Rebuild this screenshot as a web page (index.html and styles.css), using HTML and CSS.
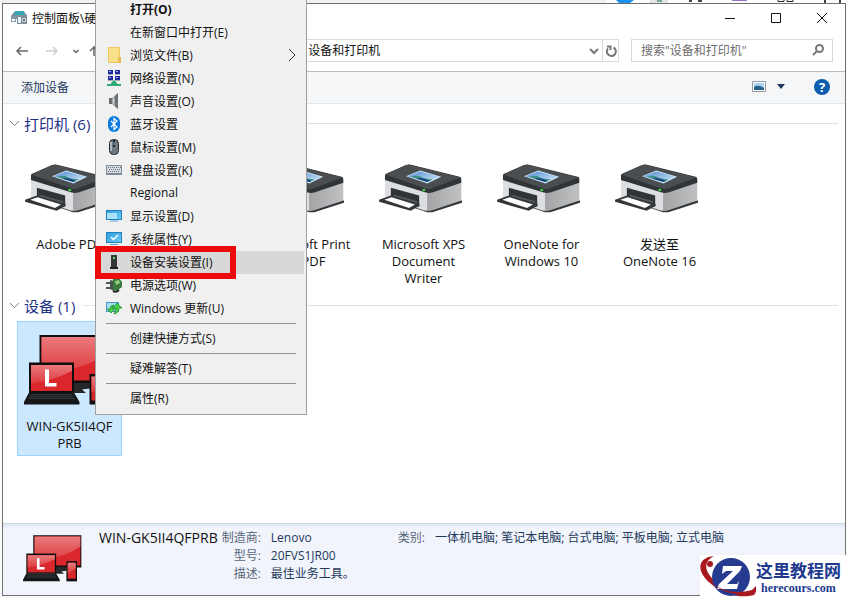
FILE: index.html
```html
<!DOCTYPE html>
<html lang="zh-CN">
<head>
    <meta charset="UTF-8">
    <meta name="viewport" content="width=device-width, initial-scale=1.0">
    <title>设备和打印机</title>
    <link rel="stylesheet" href="styles.css">
</head>
<body>
    <svg class="symbols" aria-hidden="true">
        <defs>
            <linearGradient id="side" x1="0" x2="1"><stop offset="0" stop-color="#a2a4a6"/><stop offset="1" stop-color="#bfc1c3"/></linearGradient>
            <linearGradient id="glass" x1="0" y1="0" x2="0" y2="1"><stop offset="0" stop-color="#ea7a7c"/><stop offset="1" stop-color="#dd3a3e"/></linearGradient>
            <linearGradient id="sky" x1="0" y1="0" x2="1" y2="1"><stop offset="0" stop-color="#4d8ad2"/><stop offset="1" stop-color="#d8edf8"/></linearGradient>
            <linearGradient id="blue" x1="0" y1="0" x2="1" y2="1"><stop offset="0" stop-color="#2d9fe3"/><stop offset="1" stop-color="#6cc9f4"/></linearGradient>
        </defs>
        <symbol id="printer" viewBox="232 52 256 152">
            <path d="M256 160L380 202L396 202L486 173V165L385 190Z" fill="#35383b"/>
            <path d="M252 100L385 138V196Q374 200 358 192L252 160Z" fill="#dddee1"/>
            <path d="M380 138L484 108V166L396 196Q386 199 380 198Z" fill="url(#side)"/>
            <path d="M270 127L356 151V184L270 160Z" fill="#303437"/>
            <path d="M278 148L350 168V176L278 156Z" fill="#55595c"/>
            <path d="M234 164L270 151L357 176V183L330 197L234 170Z" fill="#33373a"/>
            <path d="M250 164L272 156L343 178L325 189Z" fill="#fff"/>
            <path d="M252 89Q252 86 257 84L316 58Q323 55 331 57L479 94Q485 96 484 101V112L396 142Q386 145 376 142L252 104Z" fill="#303437"/>
            <path d="M254 88L316 59Q323 56 331 58L481 96L394 129Q386 132 377 130Z" fill="#4a4e51"/>
            <path d="M316 92L359 75L423 94L381 114Z" fill="#cbe6fa"/>
            <path d="M321 92L359 78L416 94L381 110Z" fill="url(#sky)"/>
            <path d="M330 94Q352 87 361 94T398 102L381 110Z" fill="#3f9186"/>
            <path d="M346 99Q368 94 388 107L381 110Z" fill="#17487f"/>
            <path d="M365 132L374 130V137L367 138Z" fill="#3bdc43"/>
        </symbol>
        <symbol id="computer" viewBox="68 74 178 140">
            <path d="M99 74H244V171H99Z" fill="#0e0e0f"/>
            <path d="M103 78H241V165H103Z" fill="#d9272c"/>
            <path d="M103 78H241V108Q190 144 103 152Z" fill="url(#glass)"/>
            <path d="M165 170H200V181L184 183L192 190H165Z" fill="#26282a"/>
            <path d="M78 129H168V190H78Z" fill="#0e0e0f"/>
            <path d="M82 134H164V186H82Z" fill="#d9272c"/>
            <path d="M82 134H164V146Q125 166 82 171Z" fill="url(#glass)"/>
            <path d="M110 143H118V170H133V177H110Z" fill="#fff"/>
            <path d="M78 189H168L179 208V213H68V208Z" fill="#151618"/>
            <path d="M83 192H163L170 202H77Z" fill="#36393c"/>
            <path d="M82 195H166M79 199H169" stroke="#111214" stroke-width="1.5"/>
            <path d="M199 152H231V213H199Z" fill="#0e0e0f"/>
            <path d="M203 157H227V205H203Z" fill="#d9272c"/>
            <path d="M203 157H227V174L203 190Z" fill="url(#glass)"/>
        </symbol>
    </svg>

    <div class="backdrop">
        <svg class="behind" viewBox="0 0 240 3" aria-hidden="true">
            <path d="M0 0H240V3H0Z" fill="#fff"/>
            <path d="M10 0H28L24 3H13Z" fill="#1a90ee"/>
            <path d="M44 0H62V3H44Z" fill="#dfe6e5"/><path d="M51 0H56V2H51Z" fill="#75a798"/>
            <path d="M83 1H86M92 1H96M219 0V3M234 0V3" stroke="#444" stroke-width="2"/>
            <path d="M126 0H141V1H126Z" fill="#9572ce"/>
            <path d="M172 0V1.5H178V0M181 0V1.5H187V0" fill="none" stroke="#222"/>
        </svg>
        <div class="window">
            <header class="titlebar">
                <svg class="app-icon" viewBox="0 0 16 16" aria-hidden="true">
                    <path d="M0 6L3 2H13L16 5V9H0Z" fill="#7f929e"/><path d="M4 1H13L14 5H3Z" fill="#38a5b4"/>
                    <path d="M0 6H5V12H0Z" fill="#8798a4"/><path d="M1 9H4V11H1Z" fill="#fff"/>
                    <path d="M6 6H16V14H6Z" fill="#7f8f9b"/><path d="M7 7H10V13H7Z" fill="#e8f1f5"/><circle cx="13" cy="10" r="2" fill="#e6edf1"/><circle cx="13" cy="10" r="1" fill="#34444f"/>
                </svg>
                <h1 class="title">控制面板\硬件和声音\设备和打印机</h1>
                <div class="window-buttons">
                    <button class="window-btn" aria-label="最小化"><svg viewBox="0 0 12 12"><path d="M1 6.5H11"/></svg></button>
                    <button class="window-btn" aria-label="最大化"><svg viewBox="0 0 12 12"><path d="M1.500 1.500H10.500V10.500H1.500Z"/></svg></button>
                    <button class="window-btn" aria-label="关闭"><svg viewBox="0 0 12 12"><path d="M1 1L11 11M11 1L1 11"/></svg></button>
                </div>
            </header>

            <nav class="navbar">
                <button class="nav-btn" aria-label="后退"><svg viewBox="0 0 14 12"><path d="M13 6H2M6 2L2 6L6 10" stroke="#666"/></svg></button>
                <button class="nav-btn forward" aria-label="前进"><svg viewBox="0 0 14 12"><path d="M1 6H12M8 2L12 6L8 10" stroke="#ccc"/></svg></button>
                <button class="nav-btn narrow" aria-label="最近浏览的位置"><svg viewBox="0 0 14 12"><path d="M4.500 5L7 7.500L9.500 5" stroke="#666"/></svg></button>
                <button class="nav-btn narrow" aria-label="上移"><svg viewBox="0 0 14 12"><path d="M7 11V1M3 6L7 2L11 6" stroke="#666"/></svg></button>
                <div class="address">
                    <ol class="crumbs">
                        <li><a href="#">控制面板</a></li>
                        <li><a href="#">硬件和声音</a></li>
                        <li><a href="#">设备和打印机</a></li>
                    </ol>
                    <button class="address-btn" aria-label="展开"><svg viewBox="0 0 14 14"><path d="M3 5L7 9L11 5"/></svg></button>
                    <button class="address-btn refresh" aria-label="刷新"><svg viewBox="0 0 14 14"><path d="M9.500 3.500A4.500 4.500 0 1 1 4 4.500M3 2.500H6.500V6"/></svg></button>
                </div>
                <div class="search">
                    <input class="search-input" type="text" aria-label="搜索" placeholder="搜索&quot;设备和打印机&quot;">
                    <svg viewBox="0 0 14 14" aria-hidden="true"><circle cx="8.500" cy="5.500" r="3.500"/><path d="M6 8L2 12"/></svg>
                </div>
            </nav>

            <div class="toolbar">
                <button class="add-device">添加设备</button>
                <button class="view-btn" aria-label="更改视图">
                    <svg width="14" height="11" viewBox="0 0 14 11"><path d="M.5.5H13.500V10.500H.5Z" fill="#fff" stroke="#929ba2"/><path d="M2 2H12V9H2Z" fill="#a7d3ef"/><path d="M2 6Q6 3 12 7V9H2Z" fill="#24628c"/></svg>
                    <svg width="8" height="5" viewBox="0 0 8 5"><path d="M0 0H8L4 5Z" fill="#1e395b"/></svg>
                </button>
                <button class="help-btn" aria-label="帮助">?</button>
            </div>

            <main class="content">
                <section>
                    <h2 class="group"><svg viewBox="0 0 11 7" aria-hidden="true"><path d="M1 1L5.500 5.500L10 1"/></svg>打印机 (6)</h2>
                    <ul class="tiles">
                        <li class="tile"><svg class="printer"><use href="#printer"/></svg>Adobe PDF</li>
                        <li class="tile"><svg class="printer"><use href="#printer"/></svg>Fax</li>
                        <li class="tile"><svg class="printer"><use href="#printer"/></svg>Microsoft Print to PDF</li>
                        <li class="tile"><svg class="printer"><use href="#printer"/></svg>Microsoft XPS Document Writer</li>
                        <li class="tile"><svg class="printer"><use href="#printer"/></svg>OneNote for Windows 10</li>
                        <li class="tile"><svg class="printer"><use href="#printer"/></svg>发送至<br>OneNote 16</li>
                    </ul>
                </section>
                <section>
                    <h2 class="group"><svg viewBox="0 0 11 7" aria-hidden="true"><path d="M1 1L5.500 5.500L10 1"/></svg>设备 (1)</h2>
                    <ul class="tiles">
                        <li class="tile selected"><svg class="computer"><use href="#computer"/></svg>WIN-GK5II4QF<br>PRB</li>
                    </ul>
                </section>
            </main>

            <footer class="details">
                <svg class="details-icon" aria-hidden="true"><use href="#computer"/></svg>
                <strong class="details-name">WIN-GK5II4QFPRB</strong>
                <dl class="props">
                    <dt>制造商:</dt><dd>Lenovo</dd>
                    <dt>型号:</dt><dd>20FVS1JR00</dd>
                    <dt>描述:</dt><dd>最佳业务工具。</dd>
                </dl>
                <dl class="props">
                    <dt>类别:</dt><dd>一体机电脑; 笔记本电脑; 台式电脑; 平板电脑; 立式电脑</dd>
                </dl>
            </footer>
        </div>
    </div>

    <div class="menu" role="menu">
        <button class="menu-item default" role="menuitem">打开(O)</button>
        <button class="menu-item" role="menuitem">在新窗口中打开(E)</button>
        <button class="menu-item" role="menuitem">
            <svg viewBox="0 0 16 16"><path d="M2 0H14V16H2Z" fill="#f0c95f"/><path d="M3 1H13V15H3Z" fill="#fbe08a"/><path d="M12 10H15V16H12Z" fill="#e6bd4e"/></svg>浏览文件(B)
            <svg class="arrow" viewBox="0 0 8 14"><path d="M1 1L7 7L1 13"/></svg>
        </button>
        <button class="menu-item" role="menuitem"><svg viewBox="0 0 16 16"><path d="M2 0H7V4H2ZM9 0H14V4H9ZM2 6H7V10H2ZM9 6H14V10H9Z" fill="#1f2b9d"/><path d="M3 1H5V2H3ZM10 1H12V2H10ZM3 7H5V8H3ZM10 7H12V8H10Z" fill="#9fb2f0"/><path d="M2 4.500H7M9 4.500H14M2 10.500H7M9 10.500H14" stroke="#a4aab0"/><path d="M8 10L11 13V14H15V16H1V14H5V13Z" fill="#2fa874"/></svg>网络设置(N)</button>
        <button class="menu-item" role="menuitem"><svg viewBox="0 0 16 16"><path d="M3 5H6V11H3Z" fill="#676c70"/><path d="M6 5L12 0V16L6 11Z" fill="#9da2a5"/><path d="M9 3L12 0V16L9 13Z" fill="#6a6f73"/><path d="M7 6L8 5V11L7 10Z" fill="#dce0e2"/></svg>声音设置(O)</button>
        <button class="menu-item" role="menuitem"><svg viewBox="0 0 16 16"><rect x="2" width="12" height="16" rx="6" fill="#0b7be0"/><path d="M5 5L11 11L8 13.500V2.500L11 5L5 11" fill="none" stroke="#fff" stroke-width="1.200"/></svg>蓝牙设置</button>
        <button class="menu-item" role="menuitem"><svg viewBox="0 0 16 16"><rect x="3.500" y=".5" width="9" height="15" rx="4" fill="#6d7880" stroke="#22282c"/><path d="M5 3V12" stroke="#c4cdd3" stroke-width="1.500"/><path d="M8 1V8" stroke="#22282c" stroke-width="2"/><path d="M8 3V6" stroke="#7fb7e6"/></svg>鼠标设置(M)</button>
        <button class="menu-item" role="menuitem"><svg viewBox="0 0 16 16"><path d="M0 3H16V13H0Z" fill="#7f8b95"/><path d="M1 4H15V11H1Z" fill="#d7dde2"/><path d="M2 5.500H15M3 7.500H14M2 9.500H13" stroke="#65707a" stroke-dasharray="1 1"/></svg>键盘设置(K)</button>
        <button class="menu-item" role="menuitem">Regional</button>
        <button class="menu-item" role="menuitem"><svg viewBox="0 0 16 16"><path d="M0 2H16V12H0Z" fill="#2181bd"/><path d="M1 3H15V11H1Z" fill="url(#blue)"/><path d="M1 5H11V11H1Z" fill="#a9e0fa"/><path d="M4 13H12" stroke="#5ba8d3"/></svg>显示设置(D)</button>
        <button class="menu-item" role="menuitem"><svg viewBox="0 0 16 16"><path d="M0 1H16V12H0Z" fill="#2181bd"/><path d="M1 2H15V11H1Z" fill="url(#blue)"/><path d="M5 6L7.500 8.500L12 4" fill="none" stroke="#fff" stroke-width="1.500"/><path d="M4 13.500H12" stroke="#5ba8d3"/></svg>系统属性(Y)</button>
        <button class="menu-item active" role="menuitem"><svg viewBox="0 0 16 16"><path d="M5 1H11V14H5Z" fill="#333938"/><path d="M4 13H12V15H4Z" fill="#1d211f"/><path d="M7 3H9V5H7Z" fill="#54e35c"/></svg>设备安装设置(I)</button>
        <button class="menu-item" role="menuitem"><svg viewBox="0 0 16 16"><path d="M0 6H4M0 11H4" stroke="#555" stroke-width="2"/><path d="M4 3L8 4V14L4 12Z" fill="#47554b"/><path d="M7 2L13 1L16 5V10L12 13L7 14Z" fill="#3a7a3d"/><path d="M9 4L13 3L14 6L10 8Z" fill="#93ce82"/><path d="M7 14Q10 16 13 13" fill="none" stroke="#222" stroke-width="2"/></svg>电源选项(W)</button>
        <button class="menu-item" role="menuitem"><svg viewBox="0 0 16 16"><path d="M0 2H13V12H0Z" fill="#4a94c8"/><path d="M1 3H12V11H1Z" fill="#a5def5"/><path d="M5 13L1 9H4Q4 5 8 5Q6 7 7 9H9ZM11 3L16 8H13Q13 13 8 14Q10 11 10 8H7Z" fill="#45cf46" stroke="#16852c" stroke-width=".7"/></svg>Windows 更新(U)</button>
        <hr class="menu-line">
        <button class="menu-item" role="menuitem">创建快捷方式(S)</button>
        <hr class="menu-line">
        <button class="menu-item" role="menuitem">疑难解答(T)</button>
        <hr class="menu-line">
        <button class="menu-item" role="menuitem">属性(R)</button>
    </div>

    <a class="site-badge" href="#">
        <svg viewBox="0 0 56 42" aria-hidden="true">
            <path d="M14 0C-4 2 -3 16 10 27C22 38 40 43 54 39L56 36C42 40 26 34 15 25C4 15 3 6 14 0Z" fill="#a6191f"/>
            <circle cx="31" cy="21" r="19" fill="#263a90"/>
            <path d="M23 10H42L40 15L27 28H37L39 25L37 33H17L19 28L33 15H26L22 18Z" fill="#fff"/>
            <path d="M5 20C15 34 33 39 52 34L56 30L56 36C42 42 16 37 5 20Z" fill="#a6191f"/>
            <circle cx="10" cy="8" r="3" fill="#a6191f"/>
        </svg>
        <span class="badge-text">
            <b class="badge-name">这里教程网</b>
            <span class="badge-site">herecours.com</span>
        </span>
    </a>
</body>
</html>
```
FILE: styles.css
```css
* {
    margin: 0;
    padding: 0;
    box-sizing: border-box;
}
body {
    font-family: "Open Sans", "Noto Sans CJK SC", sans-serif;
    font-size: 12px;
    color: #111;
    background: #f0f0f0;
}
button {
    font: inherit;
    color: inherit;
    border: none;
    background: none;
}
ul, ol {
    list-style: none;
}
a {
    color: inherit;
    text-decoration: none;
}
.symbols {
    position: absolute;
    width: 0;
    height: 0;
}
.backdrop {
    min-height: 100vh;
    padding: 0 1px 2px 2px;
    display: flex;
    flex-direction: column;
    background: linear-gradient(#f0f0f0 3px, #fafafa 3px);
}
.behind {
    width: 240px;
    height: 3px;
    align-self: flex-end;
}
.window {
    flex: 1;
    display: flex;
    flex-direction: column;
    border: 1px solid #6f7074;
    background: #fff;
}

/* title bar */
.titlebar {
    height: 28px;
    padding-left: 8px;
    display: flex;
    align-items: center;
    gap: 5px;
}
.app-icon {
    width: 16px;
    height: 16px;
}
.title {
    flex: 1;
    font-size: 12px;
    font-weight: normal;
}
.window-buttons {
    display: flex;
}
.window-btn {
    width: 46px;
    height: 28px;
    display: flex;
    align-items: center;
    justify-content: center;
}
.window-btn svg {
    width: 12px;
    height: 12px;
    fill: none;
    stroke: #111;
}

/* navigation */
.navbar {
    height: 40px;
    padding: 0 12px 3px;
    display: flex;
    align-items: center;
    border-bottom: 1px solid #b4bac0;
}
.nav-btn {
    width: 30px;
    height: 22px;
    text-align: left;
}
.nav-btn.forward {
    width: 24px;
}
.nav-btn.narrow {
    width: 18px;
}
.nav-btn svg {
    width: 14px;
    height: 12px;
    fill: none;
    stroke-width: 1.5;
    vertical-align: middle;
}
.address {
    flex: 1;
    height: 23px;
    display: flex;
    border: 1px solid #d9d9d9;
}
.crumbs {
    flex: 1;
    padding-left: 39px;
    display: flex;
    align-items: center;
}
.crumbs li + li::before {
    content: "›";
    padding: 0 12px;
}
.address-btn {
    width: 16px;
}
.address-btn svg, .search svg {
    width: 14px;
    height: 14px;
    fill: none;
    stroke: #777;
    stroke-width: 2;
    vertical-align: middle;
}
.refresh {
    border-left: 1px solid #d9d9d9;
}
.search {
    width: 202px;
    height: 23px;
    margin-left: 12px;
    padding: 0 7px 0 9px;
    display: flex;
    align-items: center;
    border: 1px solid #d9d9d9;
}
.search-input {
    flex: 1;
    min-width: 0;
    font: inherit;
    border: none;
    outline: none;
    background: none;
}
.search-input::placeholder {
    color: #6d6d6d;
}

/* command bar */
.toolbar {
    height: 32px;
    padding: 0 15px 2px 18px;
    display: flex;
    align-items: center;
    color: #1e395b;
    background: #f4f6f8;
    border-bottom: 1px solid #e3e6e9;
}
.add-device {
    margin-right: auto;
}
.view-btn {
    margin-right: 29px;
    display: flex;
    align-items: center;
    gap: 11px;
}
.help-btn {
    width: 16px;
    height: 16px;
    border-radius: 50%;
    font-size: 13px;
    line-height: 16px;
    font-weight: bold;
    color: #fff;
    background: #0d5cae;
}

/* groups of devices */
.content {
    flex: 1;
    padding: 5px 7px 0 6px;
}
.group {
    height: 30px;
    padding-bottom: 2px;
    display: flex;
    align-items: center;
    gap: 4px;
    font-size: 15px;
    font-weight: normal;
    color: #1e3287;
}
.group svg {
    width: 11px;
    height: 7px;
    fill: none;
    stroke: #7d8188;
}
.group::after {
    content: "";
    flex: 1;
    height: 1px;
    margin-left: 4px;
    background: #e2e2e2;
}
.tiles {
    padding-left: 8px;
    display: flex;
    flex-wrap: wrap;
    gap: 13px;
}
.tile {
    width: 105px;
    padding: 0 6px 3px;
    border: 1px solid transparent;
    font-size: 13px;
    line-height: 17px;
    text-align: center;
}
.tile.selected {
    background: #cce8ff;
    border-color: #99d1ff;
}
.printer, .computer {
    display: block;
    width: 85px;
    height: 50px;
    margin: 23px 0;
}
.computer {
    width: 89px;
    height: 70px;
    margin: 13px 0;
}

/* details pane */
.details {
    min-height: 72px;
    padding: 5px 20px 0;
    display: flex;
    align-items: flex-start;
    line-height: 18px;
    color: #1e395b;
    background: linear-gradient(#dbe6ee, #f1f4fb 4px);
    border-top: 1px solid #cbd7e0;
}
.details-icon {
    width: 59px;
    height: 47px;
    margin: 6px 17px 0 0;
}
.details-name {
    font-size: 14px;
    font-weight: normal;
    color: #111;
}
.props {
    display: grid;
    grid-template-columns: auto auto;
    column-gap: 10px;
    margin-left: 4px;
}
.props + .props {
    margin-left: 43px;
}
.props dt {
    text-align: right;
    color: #5a6779;
}

/* context menu */
.menu {
    position: absolute;
    top: -5px;
    left: 95px;
    width: 212px;
    padding: 2px 2px 4px;
    border: 1px solid #a0a0a0;
    background: #f0f0f0;
}
.menu-item {
    position: relative;
    width: 100%;
    height: 23px;
    padding: 0 8px 2px 32px;
    display: flex;
    align-items: center;
    text-align: left;
}
.menu-item svg {
    width: 16px;
    height: 16px;
    margin-left: -24px;
    margin-right: 8px;
}
.menu-item .arrow {
    width: 8px;
    height: 14px;
    margin: 0 0 0 auto;
    fill: none;
    stroke: #333;
}
.menu-item.default {
    font-weight: bold;
}
.menu-item.active {
    background: #d8d8d8;
}
.menu-item.active::after {
    content: "";
    box-sizing: border-box;
    position: absolute;
    z-index: 1;
    top: -5px;
    left: -3px;
    width: 141px;
    height: 33px;
    border: 6px solid #ed0a0a;
}
.menu-line {
    height: 1px;
    margin: 3px 8px;
    border: none;
    background: #919191;
}

/* site badge in the corner */
.site-badge {
    position: absolute;
    right: 0;
    bottom: 0;
    width: 147px;
    height: 43px;
    display: flex;
    align-items: center;
    color: #20398f;
    background: #fff;
}
.site-badge svg {
    width: 56px;
    height: 42px;
}
.badge-text {
    display: flex;
    flex-direction: column;
    align-items: center;
}
.badge-name {
    font-family: "Noto Sans CJK SC", sans-serif;
    font-size: 17px;
    line-height: 22px;
}
.badge-site {
    font-family: "Liberation Serif", serif;
    font-size: 12px;
    line-height: 14px;
    font-weight: bold;
}
```
